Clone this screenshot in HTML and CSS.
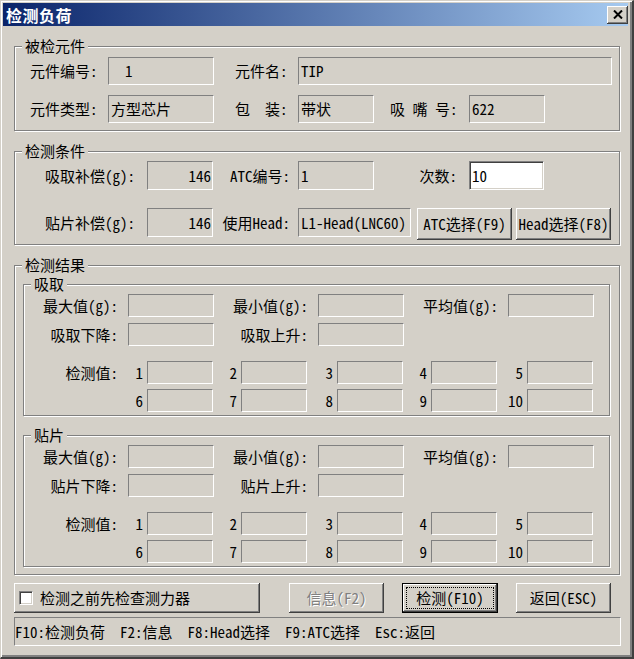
FILE: index.html
```html
<!DOCTYPE html>
<html lang="zh-CN">
<head>
<meta charset="utf-8">
<title>检测负荷</title>
<link rel="stylesheet" href="styles.css">
</head>
<body>
<div class="window">
  <div class="titlebar">
    <span class="title">检测负荷</span>
    <span class="close"><svg width="10" height="9" viewBox="0 0 10 9"><path d="M1 0.5 L9 8.5 M9 0.5 L1 8.5" stroke="#000" stroke-width="2" fill="none"/></svg></span>
  </div>
  <div class="client">
    <fieldset class="group part">
      <legend>被检元件</legend>
      <div class="body">
        <div class="row">
          <span class="lbl w78">元件编号:</span>
          <span class="field w106 indent">1</span>
          <span class="lbl w63 ml21">元件名:</span>
          <span class="field w314">TIP</span>
        </div>
        <div class="row next">
          <span class="lbl w78">元件类型:</span>
          <span class="field w106">方型芯片</span>
          <span class="lbl w63 ml21">包&nbsp;&nbsp;装:</span>
          <span class="field w76">带状</span>
          <span class="lbl w79 ml16">吸&nbsp;嘴&nbsp;号:</span>
          <span class="field w76">622</span>
        </div>
      </div>
    </fieldset>

    <fieldset class="group cond">
      <legend>检测条件</legend>
      <div class="body">
        <div class="row">
          <span class="lbl w102">吸取补偿(g):</span>
          <span class="field w66 num">146</span>
          <span class="lbl w85 right">ATC编号:</span>
          <span class="field w76">1</span>
          <span class="lbl w95 right pr12">次数:</span>
          <span class="input w75">10</span>
        </div>
        <div class="row tall">
          <span class="lbl w102">贴片补偿(g):</span>
          <span class="field w66 num">146</span>
          <span class="lbl w85 right">使用Head:</span>
          <span class="field w113">L1-Head(LNC60)</span>
          <span class="btn w95 ml6">ATC选择(F9)</span>
          <span class="btn w95 ml4">Head选择(F8)</span>
        </div>
      </div>
    </fieldset>

    <fieldset class="group result">
      <legend>检测结果</legend>
      <div class="body">
        <fieldset class="group sub">
          <legend>吸取</legend>
          <div class="body">
            <div class="srow">
              <span class="slbl">最大值(g):</span><span class="field w86"></span>
              <span class="slbl">最小值(g):</span><span class="field w86"></span>
              <span class="slbl">平均值(g):</span><span class="field w86"></span>
            </div>
            <div class="srow r2">
              <span class="slbl">吸取下降:</span><span class="field w86"></span>
              <span class="slbl">吸取上升:</span><span class="field w86"></span>
            </div>
            <div class="srow r3">
              <span class="slbl">检测值:</span>
              <span class="no n20">1</span><span class="field w66"></span>
              <span class="no n28">2</span><span class="field w66"></span>
              <span class="no n30">3</span><span class="field w66"></span>
              <span class="no n28">4</span><span class="field w66"></span>
              <span class="no n30">5</span><span class="field w66"></span>
            </div>
            <div class="srow r4">
              <span class="slbl"></span>
              <span class="no n20">6</span><span class="field w66"></span>
              <span class="no n28">7</span><span class="field w66"></span>
              <span class="no n30">8</span><span class="field w66"></span>
              <span class="no n28">9</span><span class="field w66"></span>
              <span class="no n30">10</span><span class="field w66"></span>
            </div>
          </div>
        </fieldset>
        <fieldset class="group sub second">
          <legend>贴片</legend>
          <div class="body">
            <div class="srow">
              <span class="slbl">最大值(g):</span><span class="field w86"></span>
              <span class="slbl">最小值(g):</span><span class="field w86"></span>
              <span class="slbl">平均值(g):</span><span class="field w86"></span>
            </div>
            <div class="srow r2">
              <span class="slbl">贴片下降:</span><span class="field w86"></span>
              <span class="slbl">贴片上升:</span><span class="field w86"></span>
            </div>
            <div class="srow r3">
              <span class="slbl">检测值:</span>
              <span class="no n20">1</span><span class="field w66"></span>
              <span class="no n28">2</span><span class="field w66"></span>
              <span class="no n30">3</span><span class="field w66"></span>
              <span class="no n28">4</span><span class="field w66"></span>
              <span class="no n30">5</span><span class="field w66"></span>
            </div>
            <div class="srow r4">
              <span class="slbl"></span>
              <span class="no n20">6</span><span class="field w66"></span>
              <span class="no n28">7</span><span class="field w66"></span>
              <span class="no n30">8</span><span class="field w66"></span>
              <span class="no n28">9</span><span class="field w66"></span>
              <span class="no n30">10</span><span class="field w66"></span>
            </div>
          </div>
        </fieldset>
      </div>
    </fieldset>

    <div class="actions">
      <div class="checkpanel">
        <span class="checkbox"></span>
        <span class="checktext">检测之前先检查测力器</span>
      </div>
      <span class="btn w95 disabled info">信息(F2)</span>
      <span class="btn default test"><span class="focus">检测(F10)</span></span>
      <span class="btn w95 back">返回(ESC)</span>
    </div>

    <div class="status">F10:检测负荷&nbsp;&nbsp;F2:信息&nbsp;&nbsp;F8:Head选择&nbsp;&nbsp;F9:ATC选择&nbsp;&nbsp;Esc:返回</div>
  </div>
</div>
</body>
</html>
```
FILE: styles.css
```css
* { box-sizing: border-box; }
html, body { margin: 0; padding: 0; }
body {
  background: #d4d0c8;
  font-family: "Noto Sans Mono CJK SC", "Noto Sans CJK SC", monospace;
  font-size: 15px;
  line-height: 16px;
  color: #000;
}
.window {
  width: 634px;
  height: 659px;
  background: #d4d0c8;
  border-left: 1px solid #d4d0c8;
  border-top: 1px solid #d4d0c8;
  border-right: 2px solid #404040;
  border-bottom: 2px solid #404040;
  box-shadow: inset 1px 1px 0 #fff, inset -2px -2px 0 #808080;
  padding: 2px 4px 2px 2px;
}
.titlebar {
  height: 23px;
  display: flex;
  align-items: center;
  justify-content: space-between;
  background: linear-gradient(to right, #0a246a, #a6caf0);
  padding-left: 3px;
}
.title {
  color: #fff;
  font-family: "Noto Sans CJK SC", sans-serif;
  font-weight: bold;
  font-size: 16px;
  letter-spacing: 0.5px;
}
.close {
  width: 21px;
  height: 18px;
  display: flex;
  align-items: center;
  justify-content: center;
  background: #d4d0c8;
  box-shadow: inset -1px -1px 0 #404040, inset 1px 1px 0 #fff, inset -2px -2px 0 #808080;
}
.client { padding: 12px 0 0 11px; }

.group {
  margin: 0;
  padding: 0;
  border: 1px solid #808080;
  box-shadow: inset 1px 1px 0 #fff, 1px 1px 0 #fff;
  min-inline-size: 0;
  width: 606px;
}
.group > legend {
  margin-left: 7px;
  padding: 0 3px;
  height: 16px;
  line-height: 16px;
  background: #d4d0c8;
}
.part > .body { padding: 3px 0 7px 15px; }
.cond { margin-top: 12px; }
.cond > .body { padding: 2px 0 4px 30px; }
.result { margin-top: 12px; }
.result > .body { padding: 3px 0 7px 8px; }
.sub { width: 587px; }
.sub.second { margin-top: 11px; }
.sub > .body { padding: 2px 0 3px 0; }

.row { display: flex; align-items: center; height: 28px; }
.row.next { margin-top: 10px; }
.cond .row { height: 29px; }
.cond .row.tall { margin-top: 18px; height: 32px; align-items: flex-start; }
.cond .row.tall > .lbl, .cond .row.tall > .field { height: 29px; }

.lbl { display: flex; align-items: center; white-space: nowrap; flex: none; height: 100%; }
.lbl.right { justify-content: flex-end; padding-right: 8px; }
.lbl.pr12 { padding-right: 12px; }

.field {
  flex: none;
  height: 100%;
  display: flex;
  align-items: center;
  padding-left: 2px;
  border-top: 1px solid #808080;
  border-left: 1px solid #808080;
  border-bottom: 1px solid #fff;
  border-right: 1px solid #fff;
  white-space: nowrap;
}
.field.indent { padding-left: 16px; }
.field.num { justify-content: flex-end; padding-right: 1px; }
.input {
  flex: none;
  height: 100%;
  display: flex;
  align-items: center;
  padding-left: 2px;
  background: #fff;
  border-top: 1px solid #808080;
  border-left: 1px solid #808080;
  border-bottom: 1px solid #fff;
  border-right: 1px solid #fff;
  box-shadow: inset 1px 1px 0 #404040, inset -1px -1px 0 #d4d0c8;
}

.w63 { width: 63px; } .w66 { width: 66px; } .w75 { width: 75px; } .w76 { width: 76px; }
.w78 { width: 78px; } .w79 { width: 79px; } .w85 { width: 85px; } .w86 { width: 86px; }
.w95 { width: 95px; } .w102 { width: 102px; } .w106 { width: 106px; } .w113 { width: 113px; }
.w314 { width: 314px; }
.ml4 { margin-left: 4px; } .ml6 { margin-left: 6px; } .ml16 { margin-left: 16px; } .ml21 { margin-left: 21px; }

.btn {
  flex: none;
  height: 32px;
  display: flex;
  align-items: center;
  justify-content: center;
  white-space: nowrap;
  background: #d4d0c8;
  box-shadow: inset -1px -1px 0 #404040, inset 1px 1px 0 #fff, inset -2px -2px 0 #808080;
}

.srow { display: flex; align-items: center; height: 23px; }
.srow.r2 { margin-top: 6px; }
.srow.r3 { margin-top: 15px; }
.srow.r4 { margin-top: 5px; }
.slbl { flex: none; width: 104px; padding-right: 10px; text-align: right; white-space: nowrap; }
.no { flex: none; text-align: right; padding-right: 4px; }
.n20 { width: 19px; } .n28 { width: 28px; } .n30 { width: 30px; }

.actions { display: flex; height: 30px; margin-top: 8px; }
.actions .btn { height: 30px; }
.checkpanel {
  width: 246px;
  display: flex;
  align-items: center;
  padding-left: 5px;
  box-shadow: inset -1px -1px 0 #404040, inset 1px 1px 0 #fff, inset -2px -2px 0 #808080;
}
.checkbox {
  width: 14px;
  height: 14px;
  background: #fff;
  border-top: 1px solid #808080;
  border-left: 1px solid #808080;
  border-bottom: 1px solid #fff;
  border-right: 1px solid #fff;
  box-shadow: inset 1px 1px 0 #404040, inset -1px -1px 0 #d4d0c8;
}
.checktext { margin-left: 7px; }
.info { margin-left: 29px; }
.disabled { color: #808080; text-shadow: 1px 1px 0 #fff; }
.test {
  margin-left: 18px;
  width: 96px;
  border: 1px solid #000;
  padding: 3px;
}
.focus {
  flex: 1;
  align-self: stretch;
  display: flex;
  align-items: center;
  justify-content: center;
  border: 1px dotted #000;
}
.back { margin-left: 18px; }

.status {
  margin-top: 4px;
  width: 607px;
  height: 29px;
  display: flex;
  align-items: center;
  white-space: pre;
  border-top: 1px solid #808080;
  border-left: 1px solid #808080;
  border-bottom: 1px solid #fff;
  border-right: 1px solid #fff;
}
```
